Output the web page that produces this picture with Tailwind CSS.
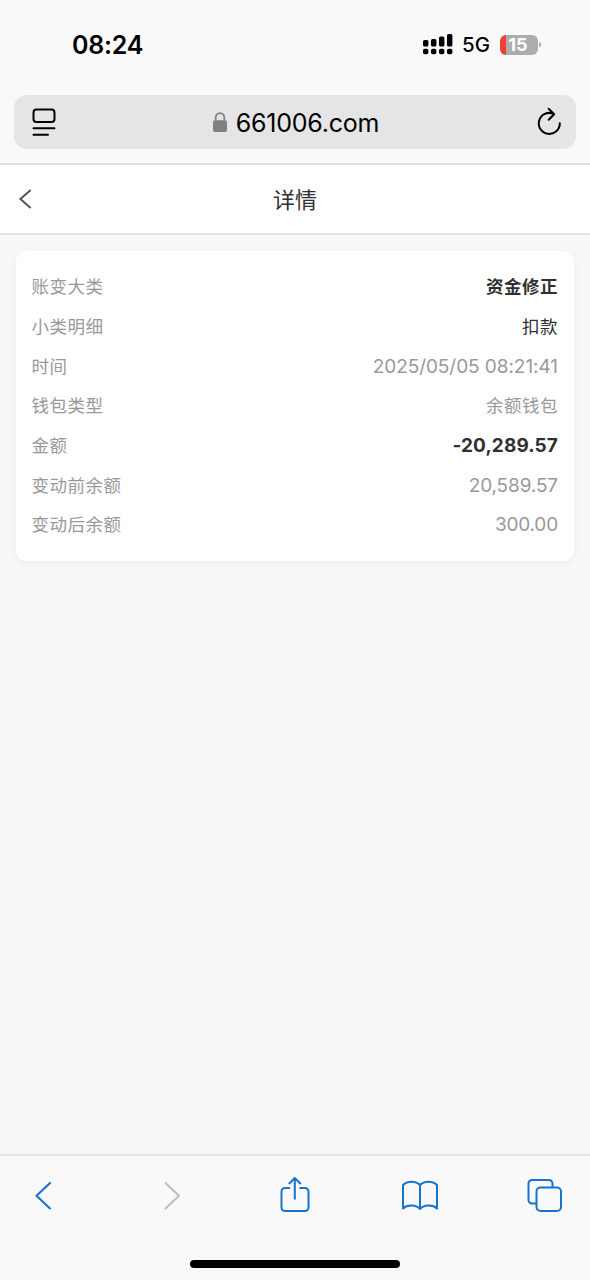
<!DOCTYPE html>
<html lang="zh-CN">
<head>
<meta charset="utf-8">
<meta name="viewport" content="width=device-width, initial-scale=1">
<title>详情</title>
<script src="https://cdn.jsdelivr.net/npm/@tailwindcss/browser@4"></script>
</head>
<body class="flex h-[1280px] w-[590px] flex-col overflow-hidden bg-[#f8f8f8] font-['Inter','Noto_Sans_CJK_SC',sans-serif] text-black">
  <div class="flex h-[95px] shrink-0 items-start justify-between bg-[#f9f9f9] pt-[28px] pr-[49px] pl-[72px]">
    <div class="text-[25px] leading-[34px] font-semibold tracking-[-0.2px]">08:24</div>
    <div class="flex h-[33px] items-center">
      <svg class="h-[22px] w-[31px]" viewBox="0 0 31 22">
        <rect x="0" y="6" width="5.4" height="6.6" rx="1.6"/><rect x="8" y="5" width="5.4" height="7.6" rx="1.6"/><rect x="16" y="2.4" width="5.4" height="10.2" rx="1.6"/><rect x="24" y="0" width="5.4" height="12.6" rx="1.6"/>
        <rect x="0" y="14.8" width="5.4" height="5.4" rx="1.8"/><rect x="8" y="14.8" width="5.4" height="5.4" rx="1.8"/><rect x="16" y="14.8" width="5.4" height="5.4" rx="1.8"/><rect x="24" y="14.8" width="5.4" height="5.4" rx="1.8"/>
      </svg>
      <span class="ml-[8px] w-[30px] text-[20.5px] leading-[33px] font-medium">5G</span>
      <div class="ml-[8px] flex h-[20px] w-[38px] items-center justify-center rounded-[6px] bg-linear-to-r from-[#ee3f38] from-[15%] to-[#adadad] to-[15%] text-[18px] leading-[20px] font-bold text-white"><span class="mr-[2px]">15</span></div>
      <div class="ml-[1px] h-[5px] w-[2px] rounded-r-full bg-[#adadad]"></div>
    </div>
  </div>

  <div class="h-[70px] shrink-0 border-b-2 border-[#e0e0e0] bg-[#f9f9f9] px-[14px]">
    <div class="flex h-[54px] items-center justify-between rounded-[13px] bg-[#e5e5e5] pr-[14px] pl-[18px]">
      <svg class="mt-[2px] h-[30px] w-[24px]" viewBox="0 0 24 30" fill="none" stroke="black" stroke-width="2" stroke-linecap="round">
        <rect x="1.5" y="1.5" width="21" height="12.5" rx="3"/><path d="M1.5 20.2H22.5M1.5 26.8H16"/>
      </svg>
      <div class="flex items-center">
        <svg class="h-[21px] w-[15px]" viewBox="0 0 15 21"><rect x="0" y="8.3" width="14" height="11.6" rx="2" fill="#808084"/><path d="M2.7 9V5.5a4.3 4.3 0 0 1 8.6 0V9" fill="none" stroke="#808084" stroke-width="1.7"/></svg>
        <span class="ml-[8px] pt-px text-[25px] leading-[34px] tracking-[-0.25px]">661006.com</span>
      </div>
      <svg class="h-[30px] w-[26px]" viewBox="0 0 26 30" fill="none" stroke="black" stroke-width="2" stroke-linecap="round" stroke-linejoin="round">
        <path d="M23.8 16.2A10.5 10.5 0 1 1 17.5 6.8M12.7 1.8L18.2 7.2L12.7 12.8"/>
      </svg>
    </div>
  </div>

  <header class="grid h-[70px] shrink-0 grid-cols-[1fr_auto_1fr] items-center border-b-2 border-[#e4e4e4] bg-white px-[18px]">
    <svg class="h-[22px] w-[15px]" viewBox="0 0 15 22" fill="none" stroke="#555" stroke-width="2"><path d="M12.7 2L2.4 11L12.7 20"/></svg>
    <h1 class="pt-[2px] text-[22px] leading-[30px] text-[#303030]">详情</h1>
    <span></span>
  </header>

  <main class="flex-1 pt-[16px] pr-[16px] pl-[15.5px]">
    <dl class="flex h-[310px] flex-col rounded-[11px] bg-white px-4 pt-[16.6px] text-[17.5px] tracking-[0.5px] text-[#999] shadow-[0_2px_8px_rgba(0,0,0,0.05)]">
      <div class="flex h-[39.7px] items-center justify-between"><dt>账变大类</dt><dd class="font-bold text-[#303030]">资金修正</dd></div>
      <div class="flex h-[39.7px] items-center justify-between"><dt>小类明细</dt><dd class="text-[#303030]">扣款</dd></div>
      <div class="flex h-[39.7px] items-center justify-between"><dt>时间</dt><dd class="text-[19px] tracking-[-0.06px]">2025/05/05 08:21:41</dd></div>
      <div class="flex h-[39.7px] items-center justify-between"><dt>钱包类型</dt><dd>余额钱包</dd></div>
      <div class="flex h-[39.7px] items-center justify-between"><dt>金额</dt><dd class="text-[19px] font-bold tracking-[0.1px] text-[#303030]">-20,289.57</dd></div>
      <div class="flex h-[39.7px] items-center justify-between"><dt>变动前余额</dt><dd class="text-[19px] tracking-[-0.12px]">20,589.57</dd></div>
      <div class="flex h-[39.7px] items-center justify-between"><dt>变动后余额</dt><dd class="text-[19px] tracking-[-0.18px]">300.00</dd></div>
    </dl>
  </main>

  <footer class="flex h-[126px] shrink-0 flex-col items-center justify-between border-t-2 border-[#e5e5e5] bg-[#f9f9f9] pt-[20px] pb-[12px]">
    <nav class="flex w-full items-center pl-[34px]">
      <svg class="h-[40px] w-[20px]" viewBox="0 0 20 40" fill="none" stroke="#1474ce" stroke-width="2.1" stroke-linecap="round" stroke-linejoin="round"><path d="M16 7L2.5 19.8L16 32.5"/></svg>
      <svg class="ml-[109px] h-[40px] w-[20px]" viewBox="0 0 20 40" fill="none" stroke="#bfbfbf" stroke-width="2.1" stroke-linecap="round" stroke-linejoin="round"><path d="M2.5 7L16 19.8L2.5 32.5"/></svg>
      <svg class="ml-[97px] h-[40px] w-[30px]" viewBox="0 0 30 40" fill="none" stroke="#1474ce" stroke-width="2" stroke-linejoin="round"><path d="M10 12H5a3.5 3.5 0 0 0-3.5 3.5v16A3.5 3.5 0 0 0 5 35h20a3.5 3.5 0 0 0 3.5-3.5v-16A3.5 3.5 0 0 0 25 12h-5.5M14.8 23.5V2.2M8.8 8L14.8 2L20.8 8"/></svg>
      <svg class="ml-[91px] h-[40px] w-[38px]" viewBox="0 0 38 40" fill="none" stroke="#1474ce" stroke-width="2" stroke-linecap="round" stroke-linejoin="round"><path d="M19 9C15 4.5 6 4.5 2 9V32.5C6 28.5 15 28.5 19 33C23 28.5 32 28.5 36 32.5V9C32 4.5 23 4.5 19 9V33"/></svg>
      <svg class="ml-[88px] h-[40px] w-[36px]" viewBox="0 0 36 40" fill="none" stroke="#1474ce" stroke-width="2"><rect x="9.5" y="11.5" width="24.5" height="23.5" rx="4"/><path d="M9.5 27.5H5A3.5 3.5 0 0 1 1.5 24V7.5A3.5 3.5 0 0 1 5 4H22A3.5 3.5 0 0 1 25.5 7.5V11.5"/></svg>
    </nav>
    <div class="h-[8px] w-[210px] rounded-full bg-black"></div>
  </footer>
</body>
</html>
